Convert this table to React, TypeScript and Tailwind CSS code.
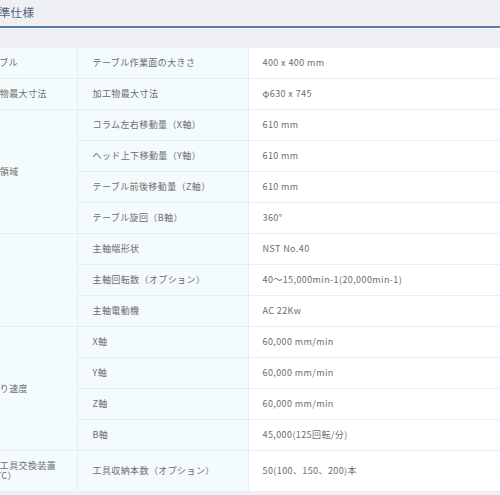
const font = { fontFamily: '"Noto Sans CJK JP", "Noto Sans", sans-serif' }

type Row = { group?: string; span?: number; item: string; value: string }

const rows: Row[] = [
  { group: 'テーブル', span: 1, item: 'テーブル作業面の大きさ', value: '400 x 400 mm' },
  { group: '工作物最大寸法', span: 1, item: '加工物最大寸法', value: 'φ630 x 745' },
  { group: '移動領域', span: 4, item: 'コラム左右移動量（X軸）', value: '610 mm' },
  { item: 'ヘッド上下移動量（Y軸）', value: '610 mm' },
  { item: 'テーブル前後移動量（Z軸）', value: '610 mm' },
  { item: 'テーブル旋回（B軸）', value: '360°' },
  { group: '主軸', span: 3, item: '主軸端形状', value: 'NST No.40' },
  { item: '主軸回転数（オプション）', value: '40～15,000min-1(20,000min-1)' },
  { item: '主軸電動機', value: 'AC 22Kw' },
  { group: '早送り速度', span: 4, item: 'X軸', value: '60,000 mm/min' },
  { item: 'Y軸', value: '60,000 mm/min' },
  { item: 'Z軸', value: '60,000 mm/min' },
  { item: 'B軸', value: '45,000(125回転/分)' },
  { group: '自動工具交換装置\n（ATC）', span: 1, item: '工具収納本数（オプション）', value: '50(100、150、200)本' },
]

export default function App() {
  return (
    <div
      className="w-[500px] h-[495px] overflow-hidden bg-gradient-to-b from-[#eff0f4] to-[#eef1f6] text-[#6d6d6d]"
      style={font}
    >
      <div className="-ml-[13px] h-[26px] pt-[4px]">
        <h2 className="text-[11.6px] leading-[16px] tracking-[0.2px] text-[#4f6279]">標準仕様</h2>
      </div>
      <div className="h-[2px] bg-[#5a7ea5]" />
      <div className="h-[1px] bg-white" />
      <div className="h-[19px]" />
      <div className="-ml-[34px] w-[620px]">
        <table className="w-full table-fixed border-collapse text-[9px] leading-[10px] tracking-[0.4px]">
          <colgroup>
            <col className="w-[111px]" />
            <col className="w-[171px]" />
            <col />
          </colgroup>
          <tbody>
            {rows.map((r, i) => (
              <tr key={i}>
                {r.group && (
                  <td
                    rowSpan={r.span}
                    className="border-b border-r border-[#e6eff4] bg-[#f4fbfd] pl-[15px] py-[10px] align-middle whitespace-pre-line"
                  >
                    {r.group}
                  </td>
                )}
                <td className="border-b border-r border-[#e6eff4] bg-[#f4fbfd] pl-[15px] py-[10px] align-middle">
                  {r.item}
                </td>
                <td className="border-b border-[#e6eff4] bg-white pl-[14px] py-[10px] align-middle">
                  {r.value}
                </td>
              </tr>
            ))}
          </tbody>
        </table>
      </div>
    </div>
  )
}
